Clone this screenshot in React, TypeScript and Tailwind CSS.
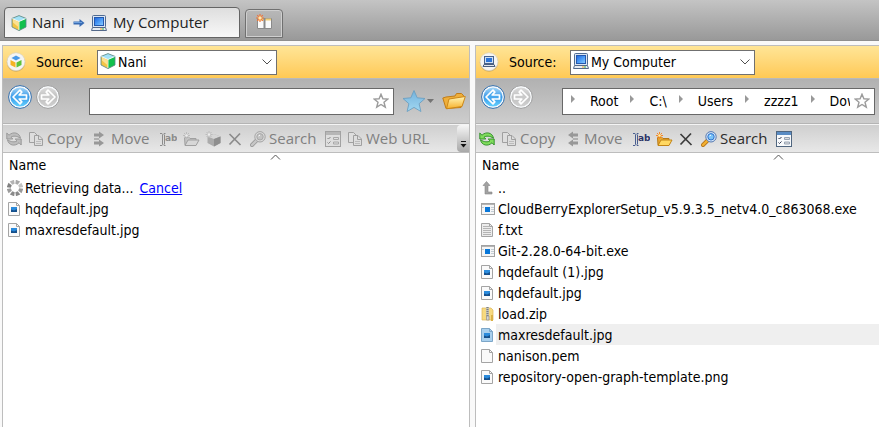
import React, { useId, useState } from "react";

type IconProps = { muted?: boolean };

const uiFont = "font-['Open_Sans','Noto_Sans',sans-serif]";
const listFont = "font-['DejaVu_Sans_Condensed','DejaVu_Sans',sans-serif]";

function CubeIcon({ muted = false }: IconProps) {
  const top = muted ? "#c6c6c6" : "#a3e2f7";
  const left = muted ? "#a2a2a2" : "#f3c544";
  const right = muted ? "#b4b4b4" : "#12c04c";
  const edge = muted ? "#8e8e8e" : "#56868c";
  return (
    <svg className="h-4 w-4 shrink-0" viewBox="0 0 16 16" aria-hidden="true">
      <path d="M8 .6 15 3.4V12L8 15.6 1 12V3.4Z" fill={left} />
      <path d="M8 6.4 15 3.4V12L8 15.6Z" fill={right} />
      <path d="M8 .6 15 3.4 8 6.6 1 3.4Z" fill={top} />
      <path d="M2 4.600 7 6.700v5L2 7.600Z" fill="#fff3c4" opacity=".6" />
      <path d="M8 .6 15 3.4V12L8 15.6 1 12V3.4Z" fill="none" stroke={edge} strokeWidth=".8" />
      <path d="M1.300 3.600 8 6.500l6.700-2.900M8 6.500V15" fill="none" stroke="#fff" strokeWidth=".9" opacity=".9" />
    </svg>
  );
}

function MonitorIcon() {
  const id = useId();
  return (
    <svg className="h-4 w-4 shrink-0" viewBox="0 0 16 16" aria-hidden="true">
      <defs>
        <linearGradient id={id} x1="0" y1="0" x2="1" y2="1">
          <stop offset="0" stopColor="#1c62dc" />
          <stop offset=".5" stopColor="#4a9af6" />
          <stop offset="1" stopColor="#8fd0ff" />
        </linearGradient>
      </defs>
      <rect x="1.500" y=".5" width="13" height="12" rx="1" fill="#dce6f2" stroke="#4f6b92" />
      <rect x="3.500" y="2.500" width="9" height="8" fill={`url(#${id})`} stroke="#2458ae" />
      <path d="M1.500 12.500h13l1 3H.5Z" fill="#e8edf3" stroke="#54698a" />
      <path d="M9 14h2" stroke="#f0a020" />
      <path d="M11 14h2" stroke="#2fa84a" />
    </svg>
  );
}

function ArrowIcon() {
  return (
    <svg className="h-3 w-3 shrink-0" viewBox="0 0 12 12" aria-hidden="true">
      <path d="M.5 4.500h6V2L11.500 6l-5 4V7.500h-6Z" fill="#3a6cb4" />
      <path d="M1 5.500h8" stroke="#6fa2de" />
    </svg>
  );
}

function NewTabIcon() {
  return (
    <svg className="h-4 w-4" viewBox="0 0 16 16" aria-hidden="true">
      <path d="M1.500 4.500h14v10h-14Z" fill="#fafafa" stroke="#8a8a8a" />
      <path d="M2 5.500h13" stroke="#f0cf78" strokeWidth="2" />
      <path d="M8.500 4v11" stroke="#8a8a8a" strokeWidth="2" />
      <path d="M4 0v8M0 4h8M1.200 1.200l5.600 5.600M6.800 1.200 1.200 6.800" stroke="#f0763a" strokeWidth="1.200" />
      <circle cx="4" cy="4" r="1.700" fill="#ffe9a8" />
    </svg>
  );
}

function SourceBadge({ kind }: { kind: "cloud" | "computer" }) {
  return (
    <svg className="h-5 w-5 shrink-0" viewBox="0 0 20 20" aria-hidden="true">
      <circle cx="10" cy="10.600" r="9.200" fill="#a8905a" opacity=".6" />
      <circle cx="10" cy="9.700" r="9" fill="#f5f5f3" stroke="#d9d2bf" strokeWidth=".7" />
      {kind === "cloud" ? (
        <g>
          <path d="M10 3.500 14.500 6 10 8.500 5.500 6Z" fill="#4a9ae8" />
          <path d="m4.500 8 5 2.500v5l-5-2.600Z" fill="#f5b323" />
          <path d="m15.500 8-5 2.500v5l5-2.600Z" fill="#5ec238" />
        </g>
      ) : (
        <g>
          <rect x="5.500" y="4.500" width="9" height="7" fill="#cfe0f5" stroke="#4a648c" />
          <path d="M7 6h6v4H7Z" fill="#2b74d8" />
          <path d="M5 12.500h10l1 2H4Z" fill="#dfe5ee" stroke="#4a5f80" />
        </g>
      )}
    </svg>
  );
}

function RoundArrowIcon({ direction }: { direction: "back" | "forward" }) {
  const id = useId();
  const back = direction === "back";
  return (
    <svg className="h-6 w-6" viewBox="0 0 24 24" aria-hidden="true">
      <defs>
        <linearGradient id={id} x1="0" y1="0" x2="0" y2="1">
          <stop offset="0" stopColor={back ? "#a5d6f8" : "#dcdcdc"} />
          <stop offset=".5" stopColor={back ? "#3a9ae8" : "#c0c0c0"} />
          <stop offset="1" stopColor={back ? "#62d0ff" : "#d0d0d0"} />
        </linearGradient>
      </defs>
      <circle cx="12" cy="12" r="11.400" fill="#f8fafc" stroke={back ? "#2f6cab" : "#9c9c9c"} />
      <circle cx="12" cy="12" r="9.600" fill={`url(#${id})`} />
      <path
        d="M5 12 12 5.200l1.800 1.900-2.600 2.900h7.300v4h-7.300l2.600 2.900-1.800 1.900Z"
        fill={back ? "#48a8ee" : "#cacaca"}
        stroke="#fff"
        strokeWidth="1.700"
        strokeLinejoin="round"
        transform={back ? undefined : "matrix(-1 0 0 1 24 0)"}
      />
    </svg>
  );
}

function OutlineStar() {
  return (
    <svg className="h-4 w-4" viewBox="0 0 16 16" aria-hidden="true">
      <path d="m8 1.200 1.900 4.600 5 .3-3.900 3.200 1.300 4.900L8 11.500l-4.300 2.700L5 9.300 1.100 6.100l5-.3Z" fill="#fff" stroke="#9c9c9c" strokeWidth="1.400" />
    </svg>
  );
}

function FavoriteStar() {
  const id = useId();
  return (
    <svg className="h-6 w-8" viewBox="0 0 32 24" aria-hidden="true">
      <defs>
        <linearGradient id={id} x1="0" y1="0" x2="0" y2="1">
          <stop offset="0" stopColor="#74b2dc" />
          <stop offset="1" stopColor="#a2d8f2" />
        </linearGradient>
      </defs>
      <path d="m12 1.500 3.200 7.300 7.800.7-5.900 5.200 1.800 7.800-6.900-4.100-6.900 4.100 1.800-7.800L1 9.500l7.800-.7Z" fill={`url(#${id})`} stroke="#6b9fc2" strokeWidth=".9" />
      <path d="M25 10h7l-3.500 4Z" fill="#747474" />
    </svg>
  );
}

function OpenFolderIcon() {
  const id = useId();
  return (
    <svg className="h-[18px] w-6" viewBox="0 0 24 18" aria-hidden="true">
      <defs>
        <linearGradient id={id} x1="0" y1="0" x2="0" y2="1">
          <stop offset="0" stopColor="#fff6b8" />
          <stop offset="1" stopColor="#f7b02a" />
        </linearGradient>
      </defs>
      <path d="M.8 6 4 5l9-1 1.500-2.500h5L21 3l1 1.500-3 11-15 1Z" fill="#efaf3a" stroke="#c07c18" />
      <path d="M7 7 23.300 4.500 20 14.500 4.500 16.800Z" fill={`url(#${id})`} stroke="#cc8718" />
    </svg>
  );
}

function RefreshIcon({ muted }: IconProps) {
  const fill = muted ? "#bdbdbd" : "#7fdc5c";
  const stroke = muted ? "#949494" : "#2a8a22";
  return (
    <svg className="h-4 w-4" viewBox="0 0 16 16" aria-hidden="true">
      <g fill={fill} stroke={stroke} strokeWidth=".9" strokeLinejoin="round">
        <path d="M.8 2v6h6L5 6.200C7 4.600 10.800 4.800 14.500 7.200 13.500 1.500 7 .2 3 4.200Z" />
        <path d="M15.200 14V8h-6L11 9.800C9 11.400 5.200 11.200 1.500 8.800 2.500 14.500 9 15.800 13 11.800Z" />
      </g>
    </svg>
  );
}

function CopyIcon() {
  return (
    <svg className="h-4 w-4" viewBox="0 0 16 16" aria-hidden="true">
      <g fill="#dedede" stroke="#a0a0a0">
        <path d="M1.500 1.500h5l3 3v7h-8Z" />
        <path d="M6.500 4.500h4.500l3.500 3.500v6.500h-8Z" />
        <path d="M10.500 4.500V8.500h4" fill="none" />
      </g>
      <path d="M8 10.500h5M8 12.500h5" stroke="#bcbcbc" />
    </svg>
  );
}

function MoveIcon({ flip }: { flip: boolean }) {
  return (
    <svg className="h-4 w-4" viewBox="0 0 16 16" aria-hidden="true">
      <g transform={flip ? "matrix(-1 0 0 1 15 0)" : undefined} fill="#989898">
        <path d="M2 2.500h5V.5L12 4 7 7.500v-2H2Z" />
        <path d="M2 10.500h5v-2l5 3.500-5 3.500v-2H2Z" />
        <path d="M2 7h5v2H2Z" fill="#b0b0b0" />
      </g>
    </svg>
  );
}

function RenameIcon({ muted }: IconProps) {
  const color = muted ? "#8c8c8c" : "#4a5f90";
  return (
    <svg className="h-4 w-[18px]" viewBox="0 0 18 16" aria-hidden="true">
      <path d="M1 2.500h2l1 1 1-1h1.500M1 14.500h2l1-1 1 1h1.500M3.500 3.500v10M5.500 3.500v10" fill="none" stroke={color} />
      <text x="6" y="10" className="font-['DejaVu_Sans'] text-[9px] font-bold" fill={muted ? color : "#2c3468"}>
        ab
      </text>
    </svg>
  );
}

function NewFolderIcon({ muted }: IconProps) {
  return (
    <svg className="h-4 w-[18px]" viewBox="0 0 18 16" aria-hidden="true">
      <path d="M2.500 6h4l1.500 1.500h6V14h-11Z" fill={muted ? "#c4c4c4" : "#eaa832"} stroke={muted ? "#a0a0a0" : "#b87a14"} />
      <path d="M6 9h11l-3 5.500H3Z" fill={muted ? "#d7d7d7" : "#ffd862"} stroke={muted ? "#a0a0a0" : "#c28416"} />
      <path d="M4.500 1v7M1 4.500h7M2 2l5 5M7 2 2 7" stroke={muted ? "#bcbcbc" : "#f58a2c"} />
      <circle cx="4.500" cy="4.500" r="1.300" fill={muted ? "#eee" : "#fff3a6"} />
    </svg>
  );
}

function NewCubeIcon() {
  return (
    <svg className="h-4 w-4" viewBox="0 0 16 16" aria-hidden="true">
      <path d="m9 3 6.500 2.500V12L9 15.500 2.500 12V5.500Z" fill="#ababab" />
      <path d="m9 3 6.500 2.500L9 8 2.500 5.500Z" fill="#d6d6d6" />
      <path d="m9 8 6.500-2.500V12L9 15.500Z" fill="#8e8e8e" />
      <path d="M4 0v7M.5 3.500h7M1.500 1l5 5M6.500 1l-5 5" stroke="#bcbcbc" />
      <circle cx="4" cy="3.500" r="1.300" fill="#eee" />
    </svg>
  );
}

function DeleteIcon({ muted }: IconProps) {
  return (
    <svg className="h-4 w-4" viewBox="0 0 16 16" aria-hidden="true">
      <path d="m2.500 3 11 11M13 2.500l-10.500 11" fill="none" stroke={muted ? "#8c8c8c" : "#3c3c3c"} strokeWidth="1.700" />
    </svg>
  );
}

function SearchIcon({ muted }: IconProps) {
  return (
    <svg className="h-4 w-4" viewBox="0 0 16 16" aria-hidden="true">
      <path d="m7 9-5 5" stroke={muted ? "#9a9a9a" : "#b5751a"} strokeWidth="4" strokeLinecap="round" />
      <path d="m7 9-5 5" stroke={muted ? "#c7c7c7" : "#f4b030"} strokeWidth="2.400" strokeLinecap="round" />
      <circle cx="10" cy="5.800" r="5.200" fill={muted ? "#dadada" : "#d5e5f8"} stroke={muted ? "#a4a4a4" : "#5579b0"} />
      <circle cx="10" cy="5.800" r="3.200" fill={muted ? "#c2c2c2" : "#7cc4f8"} stroke={muted ? "#a8a8a8" : "#2f72cc"} />
      <path d="M8.500 5 10 4" stroke="#fff" />
    </svg>
  );
}

function PropertiesIcon({ muted }: IconProps) {
  const dark = muted ? "#a2a2a2" : "#50667f";
  return (
    <svg className="h-4 w-4" viewBox="0 0 16 16" aria-hidden="true">
      <rect x=".5" y=".5" width="15" height="15" fill={muted ? "#dedede" : "#f8fafc"} stroke={dark} />
      <path d="M1 2.500h14" stroke={muted ? "#b6b6b6" : "#5a8cc4"} strokeWidth="3" />
      <path d="m2.500 7 1 1 2-2M2.500 11.500l1 1 2-2" fill="none" stroke={muted ? "#898989" : "#303850"} />
      <path d="M8.500 6.500h5v2h-5ZM8.500 11h5v2h-5Z" fill="#ddd" stroke={muted ? "#a8a8a8" : "#98a4b4"} />
    </svg>
  );
}

function ChevronDown() {
  return (
    <svg className="h-3 w-3" viewBox="0 0 12 12" aria-hidden="true">
      <path d="m1.500 3.500 4.500 4.500 4.500-4.500" fill="none" stroke="#505050" />
    </svg>
  );
}

type FileKind = "image" | "selected" | "exe" | "text" | "zip" | "blank" | "up" | "loading";

function FileIcon({ kind }: { kind: FileKind }) {
  if (kind === "loading") {
    const segments = [
      "#a8a8a8", "#c2c2c2", "#9a9a9a", "#888888", "#8a8a8a", "#9b9b9b", "#808080", "#b3b3b3",
    ];
    return (
      <svg className="h-4 w-4" viewBox="0 0 16 16" aria-hidden="true">
        {segments.map((color, i) => (
          <path key={i} d="M5.700 0h4.600L9.300 4H6.700Z" fill={color} transform={`rotate(${i * 45 + 22} 8 8)`} />
        ))}
      </svg>
    );
  }
  if (kind === "up") {
    return (
      <svg className="h-4 w-4" viewBox="0 0 16 16" aria-hidden="true">
        <path d="M6.500 1.500 10 5.500H8V12h4v2H5V5.500H3Z" fill="#a2a2a2" stroke="#868686" strokeWidth=".6" />
      </svg>
    );
  }
  if (kind === "exe") {
    return (
      <svg className="h-4 w-4" viewBox="0 0 16 16" aria-hidden="true">
        <rect x="1.500" y="2.500" width="13" height="11" fill="#f5f5f5" stroke="#a2a2a2" />
        <path d="M2 3.500h12" stroke="#b4b4b4" />
        <rect x="5" y="6" width="5" height="5" fill="#0877d9" />
        <path d="M11 6.500h3M11 8.500h3M11 10.500h3M2 6.500h2" stroke="#c3cdd5" />
      </svg>
    );
  }
  if (kind === "zip") {
    return (
      <svg className="h-4 w-4" viewBox="0 0 16 16" aria-hidden="true">
        <path d="M2 2h9l2 2v10H2Z" fill="#f7da80" stroke="#dcb658" strokeWidth=".7" />
        <path d="M11 9h2v6h-2Z" fill="#dbb146" />
        <path d="M6 1h3v9H6Z" fill="#c4c4b8" />
        <path d="M7.500 1v9" stroke="#808080" strokeWidth="2" strokeDasharray="1 1" />
        <path d="M6.500 10h2.500v4H6.500Z" fill="#d6d6d6" stroke="#909090" strokeWidth=".7" />
      </svg>
    );
  }
  const selected = kind === "selected";
  return (
    <svg className="h-4 w-4" viewBox="0 0 16 16" aria-hidden="true">
      <path d="M1.500 1.500h8l3 3v10h-11Z" fill={selected ? "#a9d0ee" : kind === "text" ? "#ececec" : "#fafafa"} stroke={selected ? "#7ca6c8" : "#a4a4a4"} />
      <path d="M9.500 1.500v3h3" fill="none" stroke={selected ? "#7ca6c8" : "#a4a4a4"} />
      {(kind === "image" || selected) && (
        <g>
          <path d="M4 6h6v5H4Z" fill="#2b8bdc" />
          <path d="M4 8.500l3 1 3-1.500V11H4Z" fill="#16508c" />
        </g>
      )}
      {kind === "text" && <path d="M3 4.500h6M3 6.500h8M3 8.500h8M3 10.500h8M3 12.500h8" stroke="#b4b4b4" />}
    </svg>
  );
}

type FileRow = { name: string; kind: FileKind };

const leftFiles: FileRow[] = [
  { name: "Retrieving data...", kind: "loading" },
  { name: "hqdefault.jpg", kind: "image" },
  { name: "maxresdefault.jpg", kind: "image" },
];

const rightFiles: FileRow[] = [
  { name: "..", kind: "up" },
  { name: "CloudBerryExplorerSetup_v5.9.3.5_netv4.0_c863068.exe", kind: "exe" },
  { name: "f.txt", kind: "text" },
  { name: "Git-2.28.0-64-bit.exe", kind: "exe" },
  { name: "hqdefault (1).jpg", kind: "image" },
  { name: "hqdefault.jpg", kind: "image" },
  { name: "load.zip", kind: "zip" },
  { name: "maxresdefault.jpg", kind: "selected" },
  { name: "nanison.pem", kind: "blank" },
  { name: "repository-open-graph-template.png", kind: "image" },
];

function SourceBar({ kind, source, width }: { kind: "cloud" | "computer"; source: string; width: string }) {
  const id = useId();
  return (
    <div className={`flex h-8 items-center bg-gradient-to-b from-[#ffe596] to-[#ffc954] pl-[3px] text-sm ${listFont}`}>
      <SourceBadge kind={kind} />
      <label htmlFor={id} className="ml-[10px] w-[61px]">Source:</label>
      <div className={`relative ${width}`}>
        <span className="pointer-events-none absolute left-[3px] top-[3px] flex">
          {kind === "cloud" ? <CubeIcon /> : <MonitorIcon />}
        </span>
        <select id={id} className="block h-[25px] w-full appearance-none border border-[#707070] bg-white pl-5">
          <option>{source}</option>
        </select>
        <span className="pointer-events-none absolute right-1 top-1.5"><ChevronDown /></span>
      </div>
    </div>
  );
}

function HistoryButtons() {
  return (
    <div className="mb-2 flex w-[81px] shrink-0 gap-1">
      <button type="button" aria-label="Back"><RoundArrowIcon direction="back" /></button>
      <button type="button" aria-label="Forward"><RoundArrowIcon direction="forward" /></button>
    </div>
  );
}

function ToolButton({ children, className, label, muted, text }: {
  children: React.ReactNode; className: string; label: string; muted: boolean; text?: boolean;
}) {
  return (
    <button type="button" aria-label={label} disabled={muted} className={`flex h-full shrink-0 items-center gap-[3px] ${muted ? "text-[#808080]" : "text-[#2c2c2c]"} ${className}`}>
      {children}
      {text && <span>{label}</span>}
    </button>
  );
}

function Toolbar({ muted }: { muted: boolean }) {
  return (
    <div className={`flex h-[29px] items-center overflow-hidden border-y border-t-[#f4f4f4] border-b-[#bdbdbd] bg-gradient-to-b from-[#cfcfcf] to-[#e8e8e8] pl-[3px] text-[15px] ${uiFont}`}>
      <ToolButton label="Refresh" muted={muted} className="w-[22px]"><RefreshIcon muted={muted} /></ToolButton>
      <ToolButton label="Copy" text muted className="w-16"><CopyIcon /></ToolButton>
      <ToolButton label="Move" text muted className="w-[67px]"><MoveIcon flip={!muted} /></ToolButton>
      <ToolButton label="Rename" muted={muted} className="w-[23px]"><RenameIcon muted={muted} /></ToolButton>
      <ToolButton label="New folder" muted={muted} className="w-[23px]"><NewFolderIcon muted={muted} /></ToolButton>
      {muted && <ToolButton label="New bucket" muted className="w-[22px]"><NewCubeIcon /></ToolButton>}
      <ToolButton label="Delete" muted={muted} className="w-[23px]"><DeleteIcon muted={muted} /></ToolButton>
      <ToolButton label="Search" text muted={muted} className="w-[75px]"><SearchIcon muted={muted} /></ToolButton>
      <ToolButton label="Properties" muted={muted} className="w-[22px]"><PropertiesIcon muted={muted} /></ToolButton>
      {muted && <ToolButton label="Web URL" text muted className=""><CopyIcon /></ToolButton>}
      {muted && (
        <button type="button" aria-label="More tools" className="ml-auto flex h-full w-3 shrink-0 items-end justify-center rounded-l-sm bg-gradient-to-b from-[#f6f6f6] to-[#a8a8a8] pb-1">
          <svg className="h-[7px] w-[7px]" viewBox="0 0 7 7" aria-hidden="true">
            <path d="M1 .5h5" stroke="#111" />
            <path d="M.5 3h6l-3 3.500Z" fill="#111" />
          </svg>
        </button>
      )}
    </div>
  );
}

function FileTable({ files, caret }: { files: FileRow[]; caret: string }) {
  return (
    <div className={`relative grow bg-white text-sm ${listFont}`}>
      <svg className={`absolute top-px h-1.5 w-[11px] ${caret}`} viewBox="0 0 11 6" aria-hidden="true">
        <path d="M1 5.500 5.500 1 10 5.500" fill="none" stroke="#555" />
      </svg>
      <table className="w-full border-collapse">
        <thead>
          <tr className="h-6"><th scope="col" className="p-0 pl-1.5 text-left font-normal">Name</th></tr>
        </thead>
        <tbody>
          {files.map((file) => (
            <tr key={file.name} className="h-[21px]">
              <td className="p-0 pl-1">
                <div className="flex h-[21px] items-center whitespace-nowrap">
                  <span className="flex w-4 shrink-0"><FileIcon kind={file.kind} /></span>
                  <span className={`flex h-full grow items-center gap-1.5 pl-0.5 ${file.kind === "selected" ? "bg-[#efefef]" : ""}`}>
                    {file.name}
                    {file.kind === "loading" && <a href="#cancel" className="text-[#0000ff] underline">Cancel</a>}
                  </span>
                </div>
              </td>
            </tr>
          ))}
        </tbody>
      </table>
    </div>
  );
}

const navBar = "flex h-[46px] items-center border-y border-t-[#bababa] border-b-[#b4b4b4] bg-gradient-to-b from-[#b1b1b1] to-[#cdcdcd] pl-[5px]";

function Crumb({ children }: { children: string }) {
  return (
    <li className="flex shrink-0">
      <svg className="mt-1.5 h-2 w-1" viewBox="0 0 4 8" aria-hidden="true"><path d="M0 0 4 4 0 8Z" fill="#999" /></svg>
      <button type="button" className="h-[25px] pl-[15px] pr-3">{children}</button>
    </li>
  );
}

export default function App() {
  const [address, setAddress] = useState("");
  return (
    <main className="flex min-h-screen flex-col bg-[#f9f9f9] text-black">
      <header className="flex h-[41px] items-end gap-[5px] border-b border-[#8f8f8f] bg-gradient-to-b from-[#c4c4c4] to-[#999] pb-0.5 pl-1">
        <button type="button" className={`flex h-[31px] w-[236px] items-center rounded-t-[4px] border border-[#646464] bg-gradient-to-b from-[#dedede] to-[#f8f8f8] pl-1.5 text-[15px] text-[#222] ${uiFont}`}>
          <CubeIcon />
          <span className="ml-[5px] w-[41px] text-left">Nani</span>
          <ArrowIcon />
          <span className="ml-1.5 flex"><MonitorIcon /></span>
          <span className="ml-1.5">My Computer</span>
        </button>
        <button type="button" aria-label="New tab" className="flex h-[29px] w-[38px] items-center justify-center rounded-t-[4px] border border-[#707070] bg-gradient-to-b from-[#b8b8b8] to-[#a2a2a2] pb-1 shadow-[inset_0_0_0_1px_#cfcfcf]">
          <NewTabIcon />
        </button>
      </header>

      <div className="grid grow grid-cols-[470fr_404fr] gap-[5px] pt-1">
        <section aria-label="Nani" className="ml-0.5 flex min-w-0 flex-col border-x border-t border-[#bdbdbd]">
          <SourceBar kind="cloud" source="Nani" width="w-[180px]" />
          <div className={`${navBar} pr-[3px]`}>
            <HistoryButtons />
            <div className="relative min-w-0 grow">
              <input aria-label="Address" value={address} onChange={(e) => setAddress(e.target.value)} className="block h-[27px] w-full border border-[#686868] bg-white pl-2 pr-7 text-sm" />
              <button type="button" aria-label="Bookmark" className="absolute right-[5px] top-[5px]"><OutlineStar /></button>
            </div>
            <button type="button" aria-label="Favorites" className="ml-2 shrink-0"><FavoriteStar /></button>
            <button type="button" aria-label="Open folder" className="ml-2 shrink-0"><OpenFolderIcon /></button>
          </div>
          <Toolbar muted />
          <FileTable files={leftFiles} caret="left-[267px]" />
        </section>

        <section aria-label="My Computer" className="flex min-w-0 flex-col border-l border-t border-[#bdbdbd]">
          <SourceBar kind="computer" source="My Computer" width="w-[185px]" />
          <div className={`${navBar} pr-1`}>
            <HistoryButtons />
            <nav aria-label="Path" className={`flex h-[27px] min-w-0 grow border border-[#686868] bg-white pl-2 pr-1 text-sm ${listFont}`}>
              <ol className="flex min-w-0 grow overflow-hidden">
                <Crumb>Root</Crumb>
                <Crumb>C:\</Crumb>
                <Crumb>Users</Crumb>
                <Crumb>zzzz1</Crumb>
                <Crumb>Downloads</Crumb>
              </ol>
              <button type="button" aria-label="Bookmark" className="ml-1 shrink-0"><OutlineStar /></button>
            </nav>
          </div>
          <Toolbar muted={false} />
          <FileTable files={rightFiles} caret="left-[297px]" />
        </section>
      </div>
    </main>
  );
}
